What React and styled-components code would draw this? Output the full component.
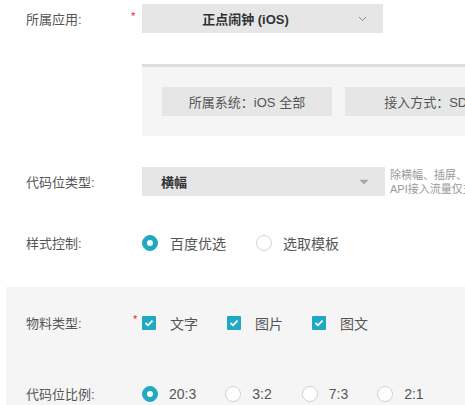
import styled, { createGlobalStyle } from 'styled-components';

const GlobalStyle = createGlobalStyle`
  html, body {
    margin: 0;
    padding: 0;
    background: #fff;
    font-family: "Liberation Sans", "Noto Sans CJK SC", sans-serif;
    color: #555;
    overflow: hidden;
  }
`;

const TEAL = '#1fa9c3';

const Page = styled.div`
  width: 465px;
  height: 405px;
  overflow: hidden;
  position: relative;
`;

const Section = styled.div`
  padding: ${p => p.$pad || '0'};
  background: ${p => (p.$shaded ? '#f5f5f5' : 'transparent')};
  margin-left: ${p => (p.$shaded ? '6px' : '0')};
  margin-top: ${p => p.$mt || 0}px;
`;

const Row = styled.div`
  display: flex;
  align-items: center;
  height: ${p => p.$h || 29}px;
  margin-top: ${p => p.$mt || 0}px;
  padding-left: ${p => (p.$inset ? 20 : 26)}px;
  white-space: nowrap;
`;

const Label = styled.div`
  width: 104px;
  flex: none;
  font-size: 13px;
  color: #555;
`;

const Star = styled.span`
  width: 12px;
  flex: none;
  color: #e0262b;
  font-size: 11px;
  align-self: flex-start;
  padding-top: ${p => p.$top || 6}px;
  padding-left: ${p => p.$left || 1}px;
  box-sizing: border-box;
`;

const Select = styled.div`
  width: ${p => p.$w}px;
  height: 29px;
  flex: none;
  background: #e6e6e6;
  display: flex;
  align-items: center;
  justify-content: ${p => (p.$center ? 'center' : 'flex-start')};
  padding: ${p => (p.$center ? '0 34px 0 0' : '0 0 0 19px')};
  box-sizing: border-box;
  font-size: 13px;
  font-weight: bold;
  color: #333;
  position: relative;
`;

const Arrow = styled.span`
  position: absolute;
  right: 16px;
  top: 50%;
  transform: translateY(-50%);
  display: flex;
`;

const Panel = styled.div`
  margin: 31px 0 0 142px;
  height: 69px;
  border-top: 3px solid #dedede;
  background: #f5f5f5;
  display: flex;
  align-items: center;
  gap: 13px;
  padding-left: 20px;
  white-space: nowrap;
  overflow: hidden;
`;

const InfoButton = styled.div`
  width: 170px;
  height: 29px;
  flex: none;
  background: #e6e6e6;
  display: flex;
  align-items: center;
  justify-content: center;
  font-size: 13px;
  color: #555;
`;

const Hint = styled.div`
  margin-left: 5px;
  font-size: 11px;
  line-height: 14px;
  color: #999;
`;

const Options = styled.div`
  display: flex;
  align-items: center;
`;

const Option = styled.label`
  display: flex;
  align-items: center;
  margin-right: ${p => p.$gap}px;
  font-size: 14px;
  color: #555;
`;

const Radio = styled.span`
  width: 16px;
  height: 16px;
  flex: none;
  border-radius: 50%;
  box-sizing: border-box;
  margin-right: ${p => p.$mr || 12}px;
  background: ${p => (p.$on ? TEAL : '#fff')};
  border: 1px solid ${p => (p.$on ? TEAL : '#d3d3d3')};
  display: flex;
  align-items: center;
  justify-content: center;

  &::after {
    content: '';
    display: ${p => (p.$on ? 'block' : 'none')};
    width: 6px;
    height: 6px;
    border-radius: 50%;
    background: #fff;
  }
`;

const Check = styled.span`
  width: 14px;
  height: 14px;
  flex: none;
  background: ${TEAL};
  border-radius: 1px;
  margin-right: 14px;
  display: flex;
  align-items: center;
  justify-content: center;
`;

const Tick = () => (
  <svg width="10" height="8" viewBox="0 0 10 8">
    <path d="M1.5 4 L4 6.3 L8.5 1.7" fill="none" stroke="#fff" strokeWidth="1.8" />
  </svg>
);

const App = () => {
  const ratios = [
    { v: '20:3', on: true, gap: 29 },
    { v: '3:2', on: false, gap: 30 },
    { v: '7:3', on: false, gap: 29 },
    { v: '2:1', on: false, gap: 0 }
  ];
  const materials = ['文字', '图片', '图文'];
  return (
    <Page>
      <GlobalStyle />
      <Row $mt={4}>
        <Label>所属应用:</Label>
        <Star>*</Star>
        <Select $w={241} $center>
          正点闹钟 (iOS)
          <Arrow>
            <svg width="9" height="6" viewBox="0 0 9 6">
              <path d="M1 1 L4.5 4.5 L8 1" fill="none" stroke="#888" strokeWidth="1" />
            </svg>
          </Arrow>
        </Select>
      </Row>

      <Panel>
        <InfoButton>所属系统：iOS 全部</InfoButton>
        <InfoButton>接入方式：SDK</InfoButton>
      </Panel>

      <Row $mt={31}>
        <Label>代码位类型:</Label>
        <Star />
        <Select $w={243}>
          横幅
          <Arrow>
            <svg width="10" height="5" viewBox="0 0 10 5">
              <path d="M0 0 L10 0 L5 5 Z" fill="#a8a8a8" />
            </svg>
          </Arrow>
        </Select>
        <Hint>
          除横幅、插屏、开屏、信息流<br />
          API接入流量仅支持
        </Hint>
      </Row>

      <Row $mt={32}>
        <Label>样式控制:</Label>
        <Star />
        <Options>
          <Option $gap={30}>
            <Radio $on />
            百度优选
          </Option>
          <Option $gap={0}>
            <Radio $mr={11} />
            选取模板
          </Option>
        </Options>
      </Row>

      <Section $shaded $pad="21px 0 0 0" $mt={30}>
        <Row $inset>
          <Label>物料类型:</Label>
          <Star $top={5} $left={3}>*</Star>
          <Options>
            {materials.map((m, i) => (
              <Option key={m} $gap={i < materials.length - 1 ? 29 : 0}>
                <Check><Tick /></Check>
                {m}
              </Option>
            ))}
          </Options>
        </Row>

        <Row $mt={42} $inset>
          <Label>代码位比例:</Label>
          <Star />
          <Options>
            {ratios.map(r => (
              <Option key={r.v} $gap={r.gap}>
                <Radio $on={r.on} $mr={11} />
                {r.v}
              </Option>
            ))}
          </Options>
        </Row>
      </Section>
    </Page>
  );
};

export default App;
